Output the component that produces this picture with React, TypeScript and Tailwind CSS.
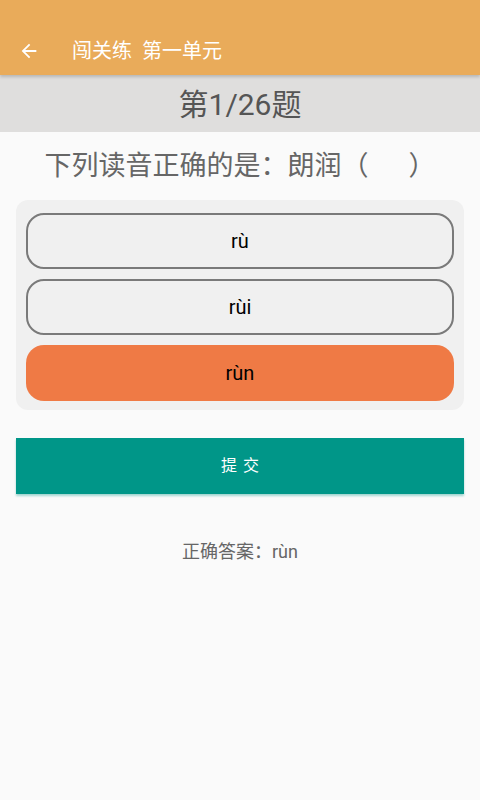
import React from "react";

const font = { fontFamily: 'Roboto, "Noto Sans CJK SC", sans-serif' };

export default function App() {
  return (
    <div className="w-[480px] h-[800px] bg-[#fafafa] flex flex-col" style={font}>
      <div className="h-[75px] bg-[#e9ab5a] flex items-end pb-[11px] shadow-[0_2px_3px_rgba(0,0,0,0.18)] relative z-10">
        <div className="w-[58px] flex justify-center pb-[2px]">
          <svg width="22" height="22" viewBox="0 0 24 24" fill="#fff">
            <path d="M20 11H7.83l5.59-5.59L12 4l-8 8 8 8 1.41-1.41L7.83 13H20v-2z" />
          </svg>
        </div>
        <div className="ml-[14px] text-white text-[20px] leading-[26px]">闯关练&nbsp;&nbsp;第一单元</div>
      </div>
      <div className="h-[57px] bg-[#dfdedd] flex items-center justify-center text-[#555555] text-[30px] pt-[2px]">第1/26题</div>
      <div className="h-[68px] flex items-center justify-center text-[#666666] text-[27px]">
        下列读音正确的是：朗润（&nbsp;&nbsp;&nbsp;&nbsp;&nbsp;&nbsp;）
      </div>
      <div className="mx-[16px] bg-[#f0f0f0] rounded-[12px] px-[10px] pt-[13px] pb-[9px] flex flex-col gap-[10px]">
        <div className="h-[56px] rounded-[18px] border-2 border-[#7a7a7a] flex items-center justify-center text-[20px] text-black">rù</div>
        <div className="h-[56px] rounded-[18px] border-2 border-[#7a7a7a] flex items-center justify-center text-[20px] text-black">rùi</div>
        <div className="h-[56px] rounded-[18px] bg-[#ef7a45] flex items-center justify-center text-[20px] text-black">rùn</div>
      </div>
      <div className="mx-[16px] mt-[28px] h-[56px] bg-[#009688] flex items-center justify-center text-white text-[16px] tracking-[6px] pl-[6px] shadow-[0_2px_2px_rgba(0,150,136,0.35)]">提交</div>
      <div className="mt-[44px] text-center text-[#666666] text-[18px]">正确答案：rùn</div>
    </div>
  );
}
